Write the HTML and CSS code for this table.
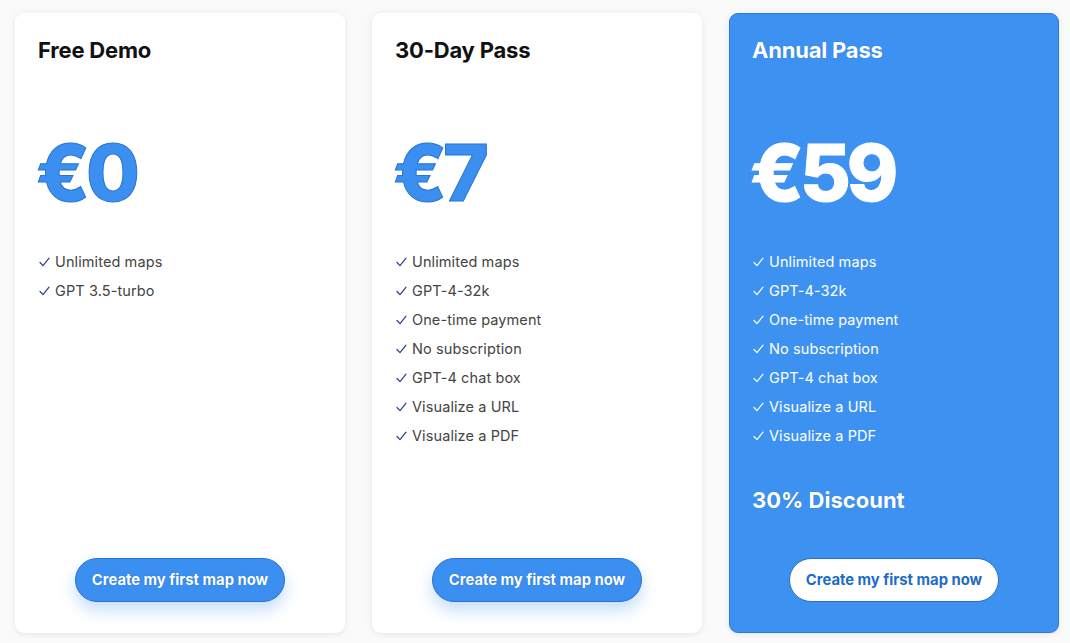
FILE: index.html
```html
<!DOCTYPE html>
<html lang="en">
<head>
<meta charset="utf-8">
<title>Pricing</title>
<link rel="stylesheet" href="styles.css">
</head>
<body>
<main class="plans">
  <section class="card">
    <h2 class="title">Free Demo</h2>
    <div class="price">€0</div>
    <ul class="features">
      <li><svg class="check" viewBox="0 0 11 10"><path d="M1 5.5 L4 8.6 L10 1.2"/></svg>Unlimited maps</li>
      <li><svg class="check" viewBox="0 0 11 10"><path d="M1 5.5 L4 8.6 L10 1.2"/></svg>GPT 3.5-turbo</li>
    </ul>
    <button class="cta">Create my first map now</button>
  </section>
  <section class="card">
    <h2 class="title">30-Day Pass</h2>
    <div class="price">€7</div>
    <ul class="features">
      <li><svg class="check" viewBox="0 0 11 10"><path d="M1 5.5 L4 8.6 L10 1.2"/></svg>Unlimited maps</li>
      <li><svg class="check" viewBox="0 0 11 10"><path d="M1 5.5 L4 8.6 L10 1.2"/></svg>GPT-4-32k</li>
      <li><svg class="check" viewBox="0 0 11 10"><path d="M1 5.5 L4 8.6 L10 1.2"/></svg>One-time payment</li>
      <li><svg class="check" viewBox="0 0 11 10"><path d="M1 5.5 L4 8.6 L10 1.2"/></svg>No subscription</li>
      <li><svg class="check" viewBox="0 0 11 10"><path d="M1 5.5 L4 8.6 L10 1.2"/></svg>GPT-4 chat box</li>
      <li><svg class="check" viewBox="0 0 11 10"><path d="M1 5.5 L4 8.6 L10 1.2"/></svg>Visualize a URL</li>
      <li><svg class="check" viewBox="0 0 11 10"><path d="M1 5.5 L4 8.6 L10 1.2"/></svg>Visualize a PDF</li>
    </ul>
    <button class="cta">Create my first map now</button>
  </section>
  <section class="card card-featured">
    <h2 class="title">Annual Pass</h2>
    <div class="price">€59</div>
    <ul class="features">
      <li><svg class="check" viewBox="0 0 11 10"><path d="M1 5.5 L4 8.6 L10 1.2"/></svg>Unlimited maps</li>
      <li><svg class="check" viewBox="0 0 11 10"><path d="M1 5.5 L4 8.6 L10 1.2"/></svg>GPT-4-32k</li>
      <li><svg class="check" viewBox="0 0 11 10"><path d="M1 5.5 L4 8.6 L10 1.2"/></svg>One-time payment</li>
      <li><svg class="check" viewBox="0 0 11 10"><path d="M1 5.5 L4 8.6 L10 1.2"/></svg>No subscription</li>
      <li><svg class="check" viewBox="0 0 11 10"><path d="M1 5.5 L4 8.6 L10 1.2"/></svg>GPT-4 chat box</li>
      <li><svg class="check" viewBox="0 0 11 10"><path d="M1 5.5 L4 8.6 L10 1.2"/></svg>Visualize a URL</li>
      <li><svg class="check" viewBox="0 0 11 10"><path d="M1 5.5 L4 8.6 L10 1.2"/></svg>Visualize a PDF</li>
    </ul>
    <div class="discount">30% Discount</div>
    <button class="cta">Create my first map now</button>
  </section>
</main>
</body>
</html>
```
FILE: styles.css
```css
* { box-sizing: border-box; }
html, body { margin: 0; padding: 0; }
body {
  background: #fafafa;
  font-family: Inter, "Noto Sans", sans-serif;
  width: 1070px;
  height: 643px;
  overflow: hidden;
}
.plans {
  display: flex;
  gap: 27px;
  padding: 13px 11px 10px 15px;
}
.card {
  width: 330px;
  height: 620px;
  background: #fff;
  border-radius: 9px;
  box-shadow: 0 0 8px rgba(0,0,0,0.06), 0 2px 4px rgba(0,0,0,0.04);
  padding: 23px 23px 31px 23px;
  display: flex;
  flex-direction: column;
}
.title {
  margin: 0;
  font-size: 22px;
  line-height: 28px;
  font-weight: 700;
  color: #111;
  letter-spacing: -0.2px;
}
.price {
  margin-top: 69px;
  font-size: 78px;
  line-height: 80px;
  font-weight: 800;
  color: #3b8ff0;
  -webkit-text-stroke: 1px #2b74d2;
  letter-spacing: -4px;
  margin-left: -2px;
}
.features {
  list-style: none;
  margin: 34px 0 0 0;
  padding: 0;
}
.features li {
  font-size: 14.5px;
  line-height: 29px;
  color: #444;
  display: flex;
  align-items: center;
  letter-spacing: 0.1px;
}
.check {
  width: 11px;
  height: 10px;
  margin: 1px 5px 0 1px;
  flex: none;
  fill: none;
  stroke: #2c3a8c;
  stroke-width: 1.2;
  stroke-linecap: round;
  stroke-linejoin: round;
}
.cta {
  margin: auto auto 0 auto;
  width: 210px;
  height: 44px;
  border-radius: 22px;
  background: #3b8ff0;
  border: 1px solid #2b72cc;
  color: #fff;
  font-family: Inter, "Noto Sans", sans-serif;
  font-size: 14.8px;
  font-weight: 700;
  text-shadow: 0 0 1px #1c5fb5;
  box-shadow: 0 8px 16px rgba(59,143,240,0.3);
  cursor: pointer;
}
.card-featured {
  background: #3d92f1;
  border: 1px solid #2e7ad6;
  padding: 22px 22px 30px 22px;
}
.card-featured .title { color: #fff; text-shadow: 0 0 1px #2a6cc0; }
.card-featured .price {
  color: #fff;
  -webkit-text-stroke: 1px #ffffff;
}
.card-featured .features li { color: #fff; }
.card-featured .check { stroke: #fff; }
.discount {
  margin-top: 36px;
  font-size: 22px;
  line-height: 28px;
  font-weight: 700;
  color: #fff;
  text-shadow: 0 0 1px #2a6cc0;
}
.card-featured .cta {
  background: #fff;
  color: #1f6cc6;
  border-color: #2a6ec2;
  text-shadow: none;
  box-shadow: none;
}
```
